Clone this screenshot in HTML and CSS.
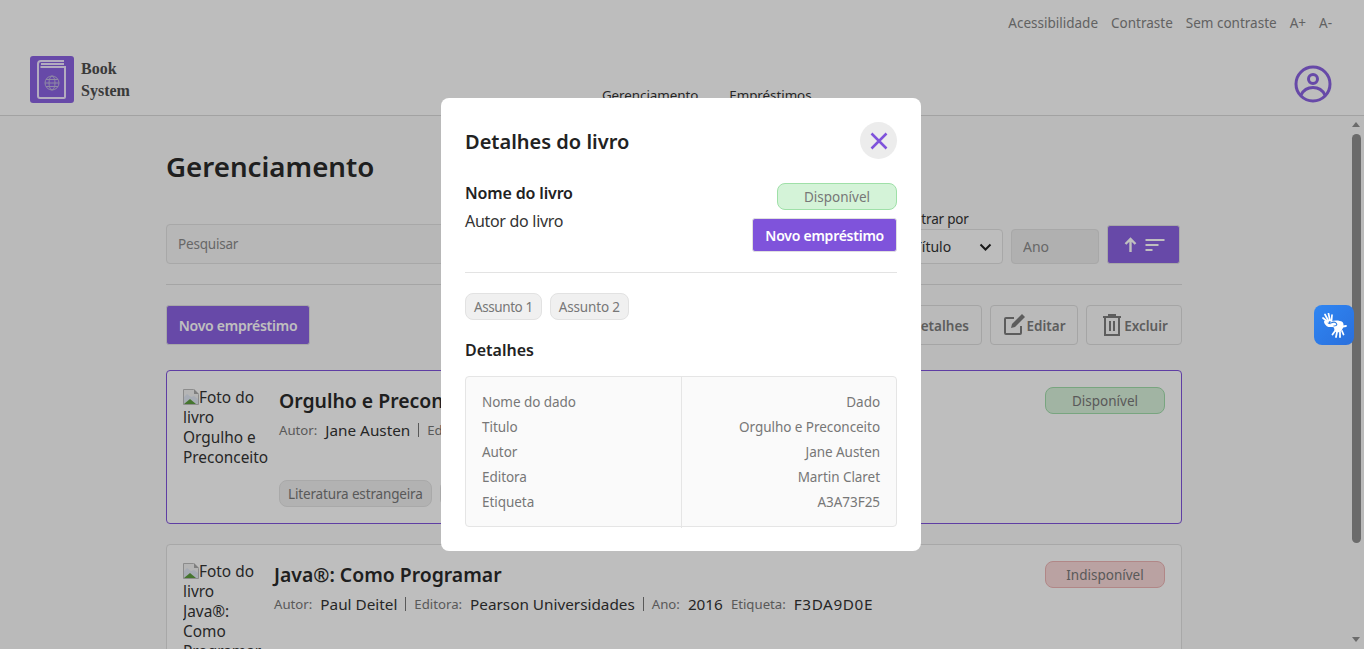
FILE: index.html
```html
<!DOCTYPE html>
<html lang="pt-BR">
<head>
<meta charset="utf-8">
<title>Book System</title>
<link rel="stylesheet" href="styles.css">
</head>
<body>
<div class="app">
  <header class="header">
    <nav class="a11y">
      <a>Acessibilidade</a><a>Contraste</a><a>Sem contraste</a><a>A+</a><a>A-</a>
    </nav>
    <div class="brandbar">
      <div class="brand">
        <svg class="logo" viewBox="0 0 44 47" aria-hidden="true">
          <rect width="44" height="47" rx="3" fill="#8a62e0"/>
          <path d="M34 5H11a3 3 0 0 0-3 3v32a2 2 0 0 0 2 2h24a1 1 0 0 0 1-1V11H10.500" fill="none" stroke="#efe6ff" stroke-width="2"/>
          <path d="M11 8h23" stroke="#efe6ff" stroke-width="2"/>
          <g fill="none" stroke="#bfb7dd" stroke-width="1">
            <circle cx="22" cy="27" r="7"/><ellipse cx="22" cy="27" rx="3" ry="7"/><path d="M15 27h14M16 23.500h12M16 30.500h12"/>
          </g>
        </svg>
        <div class="brandname">Book<br>System</div>
      </div>
      <nav class="mainnav"><a>Gerenciamento</a><a>Empréstimos</a></nav>
      <svg class="avatar" viewBox="0 0 38 38" aria-hidden="true">
        <circle cx="19" cy="19" r="17" fill="none" stroke="#8a62e0" stroke-width="3"/>
        <circle cx="19" cy="14" r="4.500" fill="none" stroke="#8a62e0" stroke-width="3"/>
        <path d="M7 30c3-6 7-7.500 12-7.500S28 24 31 30" fill="none" stroke="#8a62e0" stroke-width="3"/>
      </svg>
    </div>
  </header>
  <main class="main">
    <div class="content">
      <h1 class="pagetitle">Gerenciamento</h1>
      <div class="filters">
        <input class="field search" placeholder="Pesquisar">
        <div class="filtergroup">
          <label class="filterlabel">Filtrar por</label>
          <div class="filterrow">
            <div class="field select"><span>Título</span>
              <svg class="chev" viewBox="0 0 12 8" aria-hidden="true"><path d="M1 1.500l5 5 5-5" fill="none" stroke="#222" stroke-width="2"/></svg>
            </div>
            <input class="field year" placeholder="Ano">
          </div>
        </div>
        <button class="btn btn-dim sortbtn">
          <svg viewBox="0 0 40 16" class="sorticon" aria-hidden="true"><path d="M7 15V2M2 7l5-5 5 5" fill="none" stroke="#fff" stroke-width="2.400"/><path d="M22 3h19M22 8h13M22 13h7" stroke="#fff" stroke-width="2.200"/></svg>
        </button>
      </div>
      <hr class="rule">
      <div class="actions">
        <button class="btn btn-dim btn-new">Novo empréstimo</button>
        <div class="actiongroup">
          <button class="btn-outline btn-detalhes"><span>Detalhes</span></button>
          <button class="btn-outline btn-editar">
            <svg class="ico" viewBox="0 0 24 24" aria-hidden="true"><path d="M19 13v7a1 1 0 0 1-1 1H4a1 1 0 0 1-1-1V6a1 1 0 0 1 1-1h8" fill="none" stroke="#7d7d7d" stroke-width="2"/><path d="M9 15l1-4L20 1l3 3-10 10z" fill="#7d7d7d"/></svg>
            <span>Editar</span>
          </button>
          <button class="btn-outline btn-excluir">
            <svg class="ico" viewBox="0 0 24 24" aria-hidden="true"><path d="M3 4h18M9 4V2h6v2M5 4v18h14V4M10 8v10M14 8v10" fill="none" stroke="#7d7d7d" stroke-width="2"/></svg>
            <span>Excluir</span>
          </button>
        </div>
      </div>
      <article class="card card-active">
        <div class="bookimg bookimg-wide"><svg class="broken" viewBox="0 0 16 16" aria-hidden="true"><path d="M.5.500h10l5 5v10H.500z" fill="#f2f2f2" stroke="#bbb"/><path d="M1 8l3-3 4 3 3-1 4 3v5H1z" fill="#dfe6f2"/><path d="M1 15l6-5 6 5z" fill="#5d9c3f"/><path d="M11 0v5h5z" fill="#aaa"/></svg>Foto do livro Orgulho e Preconceito</div>
        <div class="bookbody">
          <h2 class="booktitle">Orgulho e Preconceito</h2>
          <p class="meta"><span class="k">Autor:</span> Jane Austen <i class="sep"></i> <span class="k">Editora:</span> Martin Claret</p>
          <div class="tags cardtags"><span class="tag tag-dim">Literatura estrangeira</span><span class="tag tag-dim">Romance</span></div>
        </div>
        <span class="badge badge-ok-dim">Disponível</span>
      </article>
      <article class="card">
        <div class="bookimg"><svg class="broken" viewBox="0 0 16 16" aria-hidden="true"><path d="M.5.500h10l5 5v10H.500z" fill="#f2f2f2" stroke="#bbb"/><path d="M1 8l3-3 4 3 3-1 4 3v5H1z" fill="#dfe6f2"/><path d="M1 15l6-5 6 5z" fill="#5d9c3f"/><path d="M11 0v5h5z" fill="#aaa"/></svg>Foto do livro Java®: Como Programar</div>
        <div class="bookbody">
          <h2 class="booktitle">Java®: Como Programar</h2>
          <p class="meta"><span class="k">Autor:</span> Paul Deitel <i class="sep"></i> <span class="k">Editora:</span> Pearson Universidades <i class="sep"></i> <span class="k">Ano:</span> 2016 <span class="k">Etiqueta:</span> <span class="code">F3DA9D0E</span></p>
        </div>
        <span class="badge badge-no-dim">Indisponível</span>
      </article>
    </div>
    <div class="scrollbar"><i class="arrow-up"></i><i class="thumb"></i><i class="arrow-down"></i></div>
  </main>
  <button class="vlibras" aria-label="VLibras">
    <svg viewBox="0 0 25 25" class="vicon" aria-hidden="true">
      <g fill="none" stroke="#fff" stroke-linecap="round">
        <path d="M6 9L1 5M6.500 8L3 1.500M8 7.500L6.500.500M9.500 8L10 2" stroke-width="1.700"/>
        <path d="M3.500 9c.5 2.500 3 4 6 3.500" stroke-width="3"/>
        <path d="M13 18l-2.500 3.500M15 19l-1 5M18 19l0 5M20 18l1.500 3.500M21 13.500l3-.5" stroke-width="1.800"/>
      </g>
      <path d="M8.500 8.500c4-1.500 9-1.500 12 .5 2 2 1 7-2 9.500-2.500 1.500-5 1-6-1l-.5-3-3-1z" fill="#fff"/>
      <path d="M9 10c2-1 4.500-1 5.500.5s-.5 2.500-3 2.500" fill="none" stroke="#2f7de0" stroke-width="1.100"/>
    </svg>
  </button>
</div>
<div class="overlay">
  <section class="modal">
    <div class="modalhead">
      <h2 class="modaltitle">Detalhes do livro</h2>
      <button class="close" aria-label="Fechar">
        <svg viewBox="0 0 18 18" aria-hidden="true"><path d="M1.500 1.500l15 15M16.500 1.500l-15 15" stroke="#7f53db" stroke-width="2.500" fill="none"/></svg>
      </button>
    </div>
    <div class="modalinfo">
      <div class="infotext">
        <div class="infoname">Nome do livro</div>
        <div class="infoauthor">Autor do livro</div>
      </div>
      <div class="infoside">
        <span class="badge badge-ok">Disponível</span>
        <button class="btn">Novo empréstimo</button>
      </div>
    </div>
    <hr class="modalrule">
    <div class="tags modaltags"><span class="tag tag-tight">Assunto 1</span><span class="tag">Assunto 2</span></div>
    <h3 class="subhead">Detalhes</h3>
    <div class="datatable">
      <div class="datacol">
        <div>Nome do dado</div><div>Titulo</div><div>Autor</div><div>Editora</div><div>Etiqueta</div>
      </div>
      <div class="datacol datacol-r">
        <div>Dado</div><div>Orgulho e Preconceito</div><div>Jane Austen</div><div>Martin Claret</div><div>A3A73F25</div>
      </div>
    </div>
  </section>
</div>
</body>
</html>
```
FILE: styles.css
```css
* { box-sizing: border-box; }
html, body { margin: 0; height: 100%; overflow: hidden; }
body { font-family: "Noto Sans", "Open Sans", sans-serif; font-size: 14px; color: #222; background: #f8f8f8; }
button, input { font-family: inherit; }
a { color: inherit; }

.app { position: relative; height: 100vh; display: flex; flex-direction: column; }

.header { flex: none; height: 116px; border-bottom: 1px solid #d9d9d9; background: #fcfcfc; }
.a11y { display: flex; justify-content: flex-end; gap: 13px; padding: 14px 32px 0 0; font-size: 13.500px; line-height: 19px; color: #838383; }
.brandbar { display: flex; align-items: flex-start; padding: 23px 32px 0 30px; position: relative; }
.brand { display: flex; gap: 7px; }
.logo { width: 44px; height: 47px; display: block; }
.brandname { font-family: "Liberation Serif", serif; font-weight: 700; font-size: 16px; line-height: 22px; color: #4e4e4e; padding-top: 2px; }
.mainnav { display: flex; gap: 31px; margin-left: 472px; padding-top: 30px; font-size: 13.400px; letter-spacing: -.05px; line-height: 19px; color: #333; }
.avatar { width: 38px; height: 38px; margin-left: auto; margin-top: 9px; }

.main { flex: 1; position: relative; overflow: hidden; min-height: 0; }
.content { width: 1016px; margin-left: 166px; }
.pagetitle { margin: 32px 0 0; font-size: 27.700px; line-height: 36px; font-weight: 600; color: #2a2a2a; }

.filters { display: flex; align-items: flex-end; margin-top: 26px; gap: 8px; padding-right: 2px; }
.field { height: 35px; border: 1px solid #e0e0e0; border-radius: 4px; background: #f4f4f4; font-size: 14px; padding: 0 11px; }
.field::placeholder { color: #8a8a8a; opacity: 1; }
.search { flex: 1; height: 40px; margin-right: 8px; font-size: 13.500px; letter-spacing: -.2px; }
.filtergroup { display: flex; flex-direction: column; }
.filterlabel { font-size: 13.500px; letter-spacing: -.2px; line-height: 19px; color: #333; }
.filterrow { display: flex; gap: 8px; }
.select { width: 95px; display: flex; align-items: center; justify-content: space-between; background: #fcfcfc; color: #333; padding: 0 10px 0 5px; }
.chev { width: 13px; height: 8px; }
.year { width: 88px; background: #ebebeb; }
.sortbtn { width: 73px; height: 38px; padding: 0; display: flex; align-items: center; justify-content: center; }
.sorticon { width: 50px; height: 16px; overflow: visible; }

.btn { border: 1px solid #e0e0e0; background: #7f53db; color: #fff; font-weight: 600; font-size: 14px; letter-spacing: -.25px; border-radius: 3px; height: 34px; padding: 0 12px; }
.btn-dim { background: #8a62e0; height: 40px; }
.btn-new { width: 144px; padding: 0; }
.sortbtn.btn-dim { height: 39px; }

.rule { margin: 20px 0 0; border: 0; border-top: 1px solid #ddd; }
.actions { display: flex; justify-content: space-between; align-items: center; margin-top: 20px; }
.actiongroup { display: flex; gap: 8px; }
.btn-outline { height: 40px; border: 1px solid #ddd; border-radius: 4px; background: transparent; display: flex; align-items: center; justify-content: center; padding: 0; font-size: 13.500px; font-weight: 600; color: #7d7d7d; }
.btn-outline span { padding-top: 2px; }
.btn-detalhes { width: 92px; justify-content: flex-end; padding-right: 12px; }
.btn-editar { width: 88px; }
.btn-excluir { width: 96px; }
.ico { width: 24px; height: 24px; }

.card { margin-top: 25px; border: 1px solid #e0e0e0; border-radius: 4px; padding: 16px; display: flex; gap: 11px; height: 154px; background: #fefefe; }
.card + .card { margin-top: 20px; height: 200px; }
.card-active { border-color: #7f53db; }
.bookimg { flex: none; width: 80px; padding-top: 1px; font-size: 15.400px; line-height: 20px; color: #333; overflow: hidden; }
.bookimg-wide { width: 85px; }
.broken { width: 16px; height: 16px; vertical-align: -2px; }
.bookbody { flex: 1; min-width: 0; }
.booktitle { margin: 1px 0 0; font-size: 19.400px; line-height: 26px; font-weight: 600; color: #2a2a2a; }
.meta { margin: 5px 0 0; font-size: 15.300px; line-height: 22px; color: #333; display: flex; align-items: center; gap: 8px; white-space: nowrap; }
.k { color: #777; font-size: 13.200px; }
.code { letter-spacing: .6px; }
.sep { width: 1px; height: 14px; background: #777; }

.tags { display: flex; gap: 8px; }
.cardtags { margin-top: 39px; }
.tag { height: 27px; padding: 0 8px; display: inline-flex; align-items: center; background: #f0f0f0; border: 1px solid #e2e2e2; border-radius: 8px; font-size: 13.500px; letter-spacing: -.15px; color: #777; }
.tag-tight { letter-spacing: -.42px; }
.tag-dim { background: #eee; }

.badge { flex: none; width: 120px; height: 27px; display: inline-flex; align-items: center; justify-content: center; border-radius: 8px; border: 1px solid; font-size: 13.500px; color: #777; }
.badge-ok { background: #d4f3d8; border-color: #9fe0a8; }
.badge-ok-dim { background: #d7f0da; border-color: #a1dcaa; }
.badge-no-dim { background: #f9d9d9; border-color: #ecb4b4; }

.scrollbar { position: absolute; top: 0; right: 0; bottom: 0; width: 15px; }
.thumb { position: absolute; top: 18px; left: 3px; width: 9px; height: 409px; background: #8f8f8f; border-radius: 5px; }
.arrow-up, .arrow-down { position: absolute; left: 3px; width: 0; height: 0; border-left: 4.500px solid transparent; border-right: 4.500px solid transparent; }
.arrow-up { top: 6px; border-bottom: 5px solid #8f8f8f; }
.arrow-down { bottom: 7px; border-top: 5px solid #8f8f8f; }

.vlibras { position: absolute; z-index: 20; left: 1314px; top: 305px; width: 40px; height: 40px; padding: 0; border: 0; border-radius: 8px; background: linear-gradient(135deg, #2f86f3, #2a6fdc); display: flex; align-items: center; justify-content: center; }
.vicon { width: 25px; height: 25px; }

.overlay { position: fixed; z-index: 10; inset: 0; background: rgba(0, 0, 0, .25); display: flex; align-items: center; justify-content: center; padding-right: 2px; }
.modal { width: 480px; height: 453px; background: #fff; border-radius: 8px; padding: 24px; display: flex; flex-direction: column; }
.modalhead { display: flex; align-items: center; justify-content: space-between; height: 37px; }
.modaltitle { margin: 2px 0 0; font-size: 20px; font-weight: 600; color: #222; }
.close { width: 37px; height: 37px; border: 0; border-radius: 50%; background: #ececec; padding: 0; display: flex; align-items: center; justify-content: center; }
.close svg { width: 18px; height: 18px; }
.modalinfo { display: flex; justify-content: space-between; margin-top: 24px; }
.infoname { font-size: 16px; letter-spacing: -.15px; font-weight: 600; line-height: 20px; color: #222; }
.infoauthor { font-size: 16px; letter-spacing: -.3px; line-height: 20px; margin-top: 8px; color: #333; }
.infoside { display: flex; flex-direction: column; align-items: flex-end; gap: 8px; }
.modalrule { width: 100%; margin: 20px 0 0; border: 0; border-top: 1px solid #e3e3e3; }
.modaltags { margin-top: 20px; }
.subhead { margin: 20px 0 0; font-size: 16px; line-height: 20px; font-weight: 600; color: #222; }
.datatable { margin-top: 16px; display: grid; grid-template-columns: 215px 1fr; border: 1px solid #e5e5e5; border-radius: 4px; background: #fafafa; height: 151px; }
.datacol { padding: 13px 16px; font-size: 13.500px; letter-spacing: -.05px; line-height: 25px; color: #777; }
.datacol-r { text-align: right; border-left: 1px solid #e5e5e5; }
```
